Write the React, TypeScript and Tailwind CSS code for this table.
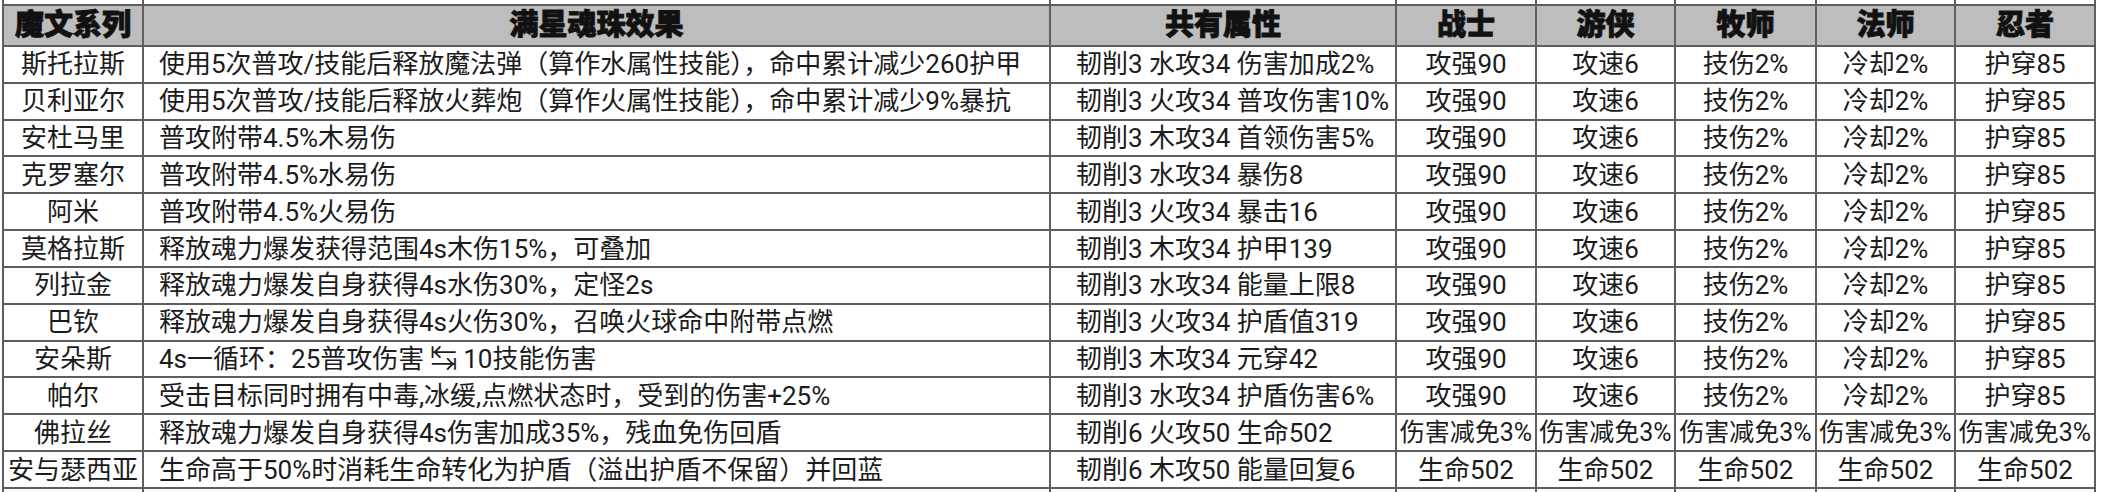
import React from "react";

type Row = {
  name: string;
  effect: string;
  shared: string;
  roles: string[];
  small?: boolean;
};

const base = ["攻强90", "攻速6", "技伤2%", "冷却2%", "护穿85"];

const rows: Row[] = [
  { name: "斯托拉斯", effect: "使用5次普攻/技能后释放魔法弹（算作水属性技能），命中累计减少260护甲", shared: "韧削3 水攻34 伤害加成2%", roles: base },
  { name: "贝利亚尔", effect: "使用5次普攻/技能后释放火葬炮（算作火属性技能），命中累计减少9%暴抗", shared: "韧削3 火攻34 普攻伤害10%", roles: base },
  { name: "安杜马里", effect: "普攻附带4.5%木易伤", shared: "韧削3 木攻34 首领伤害5%", roles: base },
  { name: "克罗塞尔", effect: "普攻附带4.5%水易伤", shared: "韧削3 水攻34 暴伤8", roles: base },
  { name: "阿米", effect: "普攻附带4.5%火易伤", shared: "韧削3 火攻34 暴击16", roles: base },
  { name: "莫格拉斯", effect: "释放魂力爆发获得范围4s木伤15%，可叠加", shared: "韧削3 木攻34 护甲139", roles: base },
  { name: "列拉金", effect: "释放魂力爆发自身获得4s水伤30%，定怪2s", shared: "韧削3 水攻34 能量上限8", roles: base },
  { name: "巴钦", effect: "释放魂力爆发自身获得4s火伤30%，召唤火球命中附带点燃", shared: "韧削3 火攻34 护盾值319", roles: base },
  { name: "安朵斯", effect: "4s一循环：25普攻伤害 ↹ 10技能伤害", shared: "韧削3 木攻34 元穿42", roles: base },
  { name: "帕尔", effect: "受击目标同时拥有中毒,冰缓,点燃状态时，受到的伤害+25%", shared: "韧削3 水攻34 护盾伤害6%", roles: base },
  { name: "佛拉丝", effect: "释放魂力爆发自身获得4s伤害加成35%，残血免伤回盾", shared: "韧削6 火攻50 生命502", roles: Array(5).fill("伤害减免3%"), small: true },
  { name: "安与瑟西亚", effect: "生命高于50%时消耗生命转化为护盾（溢出护盾不保留）并回蓝", shared: "韧削6 木攻50 能量回复6", roles: Array(5).fill("生命502") },
];

const heads = ["战士", "游侠", "牧师", "法师", "忍者"];
const cols = ["w-[140px]", "w-[907px]", "w-[346px]", "w-[140px]", "w-[139px]", "w-[141px]", "w-[139px]", "w-[140px]"];

const cell = "border-2 border-[#5e5e5e] p-0 whitespace-nowrap overflow-hidden";

export default function App() {
  return (
    <div
      className="h-[492px] w-[2104px] overflow-hidden bg-white text-[#1c1c1c]"
      style={{ fontFamily: '"Roboto", "Noto Sans CJK SC", "DejaVu Sans", sans-serif' }}
    >
      <table className="ml-[2px] w-[2094px] table-fixed border-collapse">
        <colgroup>
          {cols.map((c, i) => (
            <col key={i} className={c} />
          ))}
        </colgroup>
        <tbody>
          {/* sliver of the row above */}
          <tr className="h-[5px]">
            {cols.map((_, i) => (
              <td key={i} className={`${cell} border-t-0`} />
            ))}
          </tr>

          <tr className="h-[41px] bg-[#bdbdbd] text-[29px] font-black leading-none text-[#111] [-webkit-text-stroke:0.9px_#111]">
            <td className={`${cell} text-center`}>魔文系列</td>
            <td className={`${cell} text-center`}>满星魂珠效果</td>
            <td className={`${cell} text-center`}>共有属性</td>
            {heads.map((h) => (
              <td key={h} className={`${cell} text-center`}>
                {h}
              </td>
            ))}
          </tr>

          {rows.map((r) => (
            <tr key={r.name} className="h-[36.83px] text-[26px] leading-none">
              <td className={`${cell} text-center`}>{r.name}</td>
              <td className={`${cell} pl-[15px] text-left`}>{r.effect}</td>
              <td className={`${cell} pl-[25px] text-left`}>{r.shared}</td>
              {r.roles.map((v, i) => (
                <td key={i} className={`${cell} text-center ${r.small ? "text-[25px]" : ""}`}>
                  {v}
                </td>
              ))}
            </tr>
          ))}

          <tr className="h-[8px]">
            {cols.map((_, i) => (
              <td key={i} className={`${cell} border-b-0`} />
            ))}
          </tr>
        </tbody>
      </table>
    </div>
  );
}
